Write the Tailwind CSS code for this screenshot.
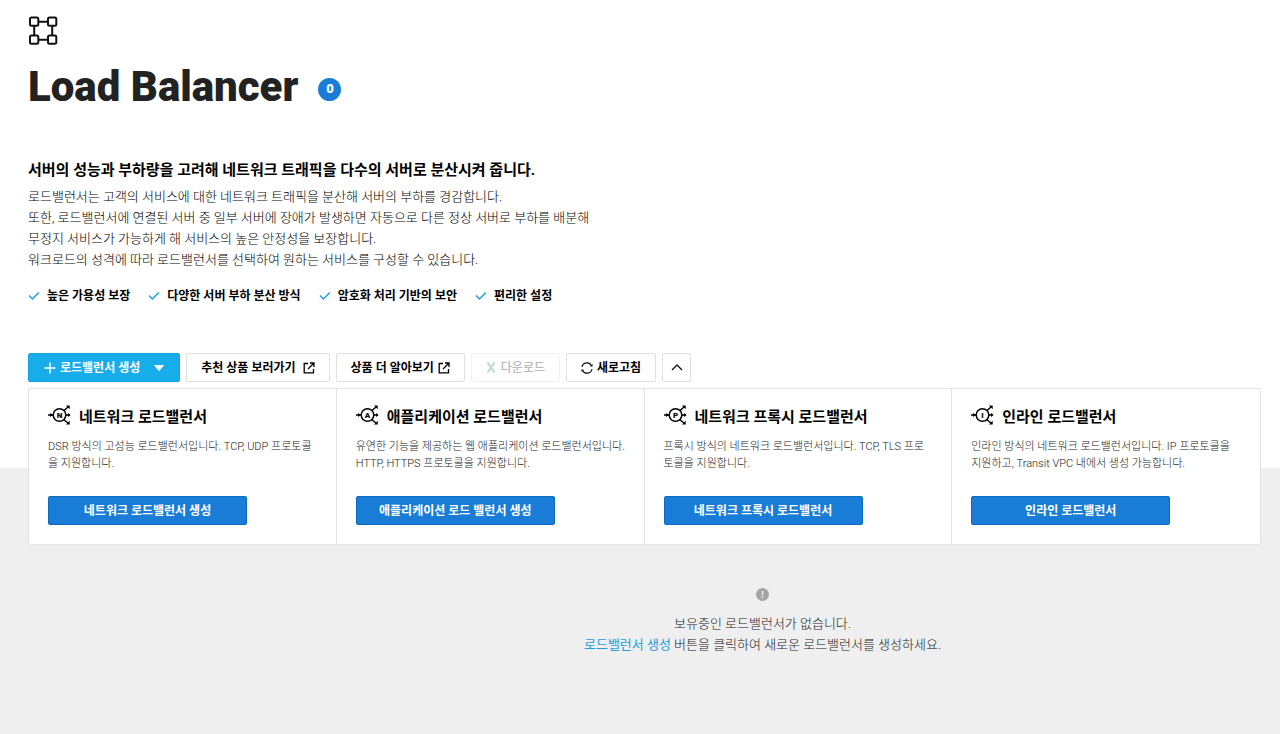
<!DOCTYPE html>
<html lang="ko">
<head>
<meta charset="utf-8">
<meta name="viewport" content="width=device-width, initial-scale=1">
<title>Load Balancer</title>
<script src="https://cdn.jsdelivr.net/npm/@tailwindcss/browser@4"></script>
</head>
<body class="min-h-screen flex flex-col bg-white text-black font-[Roboto,'Noto_Sans_CJK_KR',sans-serif] text-[13px]">

<!-- Shared icon shapes -->
<svg class="hidden" aria-hidden="true">
  <symbol id="check" viewBox="0 0 12 12"><path d="M1 5.500 4.400 8.900 10.800 2.500" fill="none" stroke="#1a9fe0" stroke-width="1.400"/></symbol>
  <symbol id="external" viewBox="0 0 12 12"><path d="M5 1.500H1.200v9.300h9.300V7M7 1h4v4M11 1 5 7" fill="none" stroke="currentColor" stroke-width="1.300"/></symbol>
  <symbol id="balancer" viewBox="0 0 24 22">
    <g fill="none" stroke="currentColor" stroke-width="1.500">
      <circle cx="11.500" cy="11" r="6.300"/>
      <path d="M0 11H5M17.800 11H21M16 6.500 20 3M15.500 15.500 20 19"/>
    </g>
    <path d="M2 9 4.700 11 2 13ZM20 9 22.700 11 20 13ZM18 1.500H21.700v3.700ZM18 20.500H21.700v-3.700Z" fill="currentColor"/>
  </symbol>
</svg>

<header class="pl-7 pr-[19px] pt-4 pb-[86px]">
  <svg class="w-[30px] h-[30px]" viewBox="0 0 30 30" fill="none" stroke="#111" stroke-width="2" aria-hidden="true">
    <rect x="2" y="1.500" width="8.300" height="8.300" rx="1.500"/><rect x="20" y="1.500" width="8.300" height="8.300" rx="1.500"/>
    <rect x="2" y="19.500" width="8.300" height="8.300" rx="1.500"/><rect x="20" y="19.500" width="8.300" height="8.300" rx="1.500"/>
    <path d="M10.500 5.700H20M10.500 23.700H20M6.200 10v9.500M24.200 10v9.500"/>
  </svg>
  <div class="flex items-center gap-5 mt-[17px] h-12">
    <h1 class="text-[42px] leading-12 font-black text-[#222]">Load Balancer</h1>
    <span class="mt-1 flex size-[23px] items-center justify-center rounded-full bg-[#197dd8] text-white text-[13px] font-black">0</span>
  </div>

  <h2 class="mt-[47px] text-[15px] leading-6 font-bold">서버의 성능과 부하량을 고려해 네트워크 트래픽을 다수의 서버로 분산시켜 줍니다.</h2>
  <p class="mt-1 leading-[21px] font-light text-black">
    로드밸런서는 고객의 서비스에 대한 네트워크 트래픽을 분산해 서버의 부하를 경감합니다.<br>
    또한, 로드밸런서에 연결된 서버 중 일부 서버에 장애가 발생하면 자동으로 다른 정상 서버로 부하를 배분해<br>
    무정지 서비스가 가능하게 해 서비스의 높은 안정성을 보장합니다.<br>
    워크로드의 성격에 따라 로드밸런서를 선택하여 원하는 서비스를 구성할 수 있습니다.
  </p>
  <ul class="mt-4 flex flex-wrap gap-x-[18px] text-[12px] leading-5 font-bold">
    <li class="flex items-center gap-[7px]"><svg class="size-3"><use href="#check"/></svg>높은 가용성 보장</li>
    <li class="flex items-center gap-[7px]"><svg class="size-3"><use href="#check"/></svg>다양한 서버 부하 분산 방식</li>
    <li class="flex items-center gap-[7px]"><svg class="size-3"><use href="#check"/></svg>암호화 처리 기반의 보안</li>
    <li class="flex items-center gap-[7px]"><svg class="size-3"><use href="#check"/></svg>편리한 설정</li>
  </ul>

  <div class="mt-[47px] flex flex-wrap gap-[6px] text-[12px] font-bold">
    <button class="flex h-[29px] items-center rounded-xs border border-[#10a5e4] bg-[#16adea] px-[15px] text-white">
      <svg class="mr-1 size-3" viewBox="0 0 12 12" aria-hidden="true"><path d="M6 0.500v11M0.500 6h11" stroke="white" stroke-width="1.500"/></svg>
      로드밸런서 생성
      <svg class="ml-[14px] h-[6px] w-[10px]" viewBox="0 0 10 6" aria-hidden="true"><path d="M0.500 0.500h9L5 5.500Z" fill="white" stroke="white" stroke-linejoin="round"/></svg>
    </button>
    <a href="#" class="flex h-[29px] items-center gap-[7px] rounded-xs border border-[#e0e0e0] bg-white px-[14px]">추천 상품 보러가기<svg class="size-3"><use href="#external"/></svg></a>
    <a href="#" class="flex h-[29px] items-center gap-1 rounded-xs border border-[#e0e0e0] bg-white px-[14px]">상품 더 알아보기<svg class="size-3"><use href="#external"/></svg></a>
    <button disabled class="flex h-[29px] items-center gap-[5px] rounded-xs border border-[#f2f2f2] bg-white px-[14px] font-medium text-[#b9b9b9]">
      <svg class="h-[11px] w-[10px]" viewBox="0 0 10 11" aria-hidden="true"><path d="M1.500 0.500 8.500 10.500M8.500 0.500 1.500 10.500" stroke="#b9dac6" stroke-width="2"/></svg>다운로드
    </button>
    <button class="flex h-[29px] items-center gap-1 rounded-xs border border-[#e0e0e0] bg-white px-[14px]">
      <svg class="size-3" viewBox="0 0 12 12" fill="none" aria-hidden="true"><path d="M1 5a5 5 0 0 1 9.500-1.200M11 7a5 5 0 0 1-9.500 1.200" stroke="#111" stroke-width="1.200"/><path d="M9 4.500h2.600V2ZM3 7.500H0.400V10Z" fill="#111"/></svg>새로고침
    </button>
    <button aria-label="접기" class="flex size-[29px] items-center justify-center rounded-xs border border-[#e0e0e0] bg-white">
      <svg class="h-[7px] w-3" viewBox="0 0 12 7" fill="none" aria-hidden="true"><path d="M1 6 6 1l5 5" stroke="#111" stroke-width="1.300"/></svg>
    </button>
  </div>
</header>

<main class="flex-1 bg-[#efefef] pl-7 pr-[19px]">
  <section class="-mt-20 grid grid-cols-4 divide-x divide-[#e3e3e3] rounded-xs border border-[#e3e3e3] bg-white">
    <article class="pl-[19px] pr-2 pt-4 pb-[19px]">
      <h3 class="flex h-6 items-center gap-[7px] text-[15px] leading-6 font-bold"><svg class="mb-1 h-[22px] w-6" viewBox="0 0 24 22"><use href="#balancer"/><text x="11.500" y="14" text-anchor="middle" font-size="8" font-weight="900">N</text></svg>네트워크 로드밸런서</h3>
      <p class="mt-[9px] leading-[17px] text-[11px] font-light text-[#222]">DSR 방식의 고성능 로드밸런서입니다. TCP, UDP 프로토콜<br>을 지원합니다.</p>
      <button class="mt-6 block h-[29px] w-[199px] rounded-xs border border-[#0c69c0] bg-[#197dd8] text-[12px] font-bold text-white">네트워크 로드밸런서 생성</button>
    </article>
    <article class="pl-[19px] pr-2 pt-4 pb-[19px]">
      <h3 class="flex h-6 items-center gap-[7px] text-[15px] leading-6 font-bold"><svg class="mb-1 h-[22px] w-6" viewBox="0 0 24 22"><use href="#balancer"/><text x="11.500" y="14" text-anchor="middle" font-size="8" font-weight="900">A</text></svg>애플리케이션 로드밸런서</h3>
      <p class="mt-[9px] leading-[17px] text-[11px] font-light text-[#222]">유연한 기능을 제공하는 웹 애플리케이션 로드밸런서입니다.<br>HTTP, HTTPS 프로토콜을 지원합니다.</p>
      <button class="mt-6 block h-[29px] w-[199px] rounded-xs border border-[#0c69c0] bg-[#197dd8] text-[12px] font-bold text-white">애플리케이션 로드 밸런서 생성</button>
    </article>
    <article class="pl-[19px] pr-2 pt-4 pb-[19px]">
      <h3 class="flex h-6 items-center gap-[7px] text-[15px] leading-6 font-bold"><svg class="mb-1 h-[22px] w-6" viewBox="0 0 24 22"><use href="#balancer"/><text x="11.500" y="14" text-anchor="middle" font-size="8" font-weight="900">P</text></svg>네트워크 프록시 로드밸런서</h3>
      <p class="mt-[9px] leading-[17px] text-[11px] font-light text-[#222]">프록시 방식의 네트워크 로드밸런서입니다. TCP, TLS 프로<br>토콜을 지원합니다.</p>
      <button class="mt-6 block h-[29px] w-[199px] rounded-xs border border-[#0c69c0] bg-[#197dd8] text-[12px] font-bold text-white">네트워크 프록시 로드밸런서</button>
    </article>
    <article class="pl-[19px] pr-2 pt-4 pb-[19px]">
      <h3 class="flex h-6 items-center gap-[7px] text-[15px] leading-6 font-bold"><svg class="mb-1 h-[22px] w-6" viewBox="0 0 24 22"><use href="#balancer"/><text x="11.500" y="14" text-anchor="middle" font-size="8" font-weight="900">I</text></svg>인라인 로드밸런서</h3>
      <p class="mt-[9px] leading-[17px] text-[11px] font-light text-[#222]">인라인 방식의 네트워크 로드밸런서입니다. IP 프로토콜을<br>지원하고, Transit VPC 내에서 생성 가능합니다.</p>
      <button class="mt-6 block h-[29px] w-[199px] rounded-xs border border-[#0c69c0] bg-[#197dd8] text-[12px] font-bold text-white">인라인 로드밸런서</button>
    </article>
  </section>

  <section class="mt-[43px] flex flex-col items-center pl-[236px] text-center leading-[21px] font-light text-[#222]">
    <svg class="size-[13px]" viewBox="0 0 13 13" aria-hidden="true"><circle cx="6.500" cy="6.500" r="6.500" fill="#a5a5a5"/><path d="M6.500 3v4.300M6.500 8.600v1.500" stroke="#efefef" stroke-width="1.500"/></svg>
    <p class="mt-3">보유중인 로드밸런서가 없습니다.<br><a href="#" class="font-normal text-[#1a9fe0]">로드밸런서 생성</a> 버튼을 클릭하여 새로운 로드밸런서를 생성하세요.</p>
  </section>
</main>
</body>
</html>
